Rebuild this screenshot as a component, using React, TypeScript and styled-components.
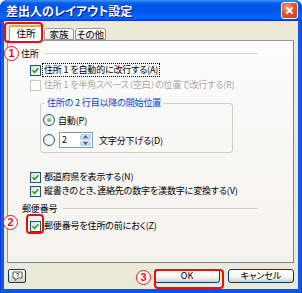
import styled, { createGlobalStyle } from "styled-components";

const Global = createGlobalStyle`
  html, body { margin: 0; padding: 0; background: #ffffff; }
  body {
    font-family: "Noto Sans CJK JP", "Liberation Sans", sans-serif;
    font-feature-settings: "palt";
  }
`;

const Window = styled.div`
  position: relative;
  width: 302px;
  height: 293px;
  display: flex;
  flex-direction: column;
  background: linear-gradient(to right, #0831d9 0, #1863ee 2px, #0055ea 4px, #0055ea 298px, #1863ee 300px, #0831d9 302px);
  border-radius: 7px 7px 0 0;
  overflow: hidden;
`;

const TitleBar = styled.div`
  height: 21px;
  flex: none;
  display: flex;
  align-items: center;
  padding: 0 4px 0 6px;
  background: linear-gradient(to bottom, #3d95ff 0, #0a5fe8 3px, #0054e3 6px, #0058ee 12px, #0066ff 17px, #005bff 19px, #003dd7 20px, #003dd7 21px);
`;

const Title = styled.div`
  flex: 1;
  color: #ffffff;
  font-size: 12px;
  font-weight: bold;
  line-height: 15px;
  text-shadow: 1px 1px 0 #0a1883;
`;

const CloseButton = styled.div`
  width: 15px;
  height: 15px;
  border: 1px solid #ffffff;
  border-radius: 3px;
  background: radial-gradient(circle at 35% 30%, #f2a48a 0, #e0552f 45%, #c5401a 100%);
  display: flex;
  align-items: center;
  justify-content: center;
`;

const Body = styled.div`
  flex: 1;
  margin: 0 4px 4px 4px;
  background: #ece9d8;
  display: flex;
  flex-direction: column;
  padding: 0 4px 0 3px;
`;

const Tabs = styled.div`
  height: 19px;
  flex: none;
  display: flex;
  align-items: flex-end;
  padding-left: 2px;
  position: relative;
  z-index: 1;
`;

const Tab = styled.div<{ $active?: boolean; $w: number }>`
  width: ${(p) => p.$w}px;
  height: ${(p) => (p.$active ? 16 : 12)}px;
  margin-bottom: ${(p) => (p.$active ? -1 : 0)}px;
  margin-right: 1px;
  box-sizing: border-box;
  border: 1px solid #919b9c;
  border-bottom: ${(p) => (p.$active ? "none" : "1px solid #919b9c")};
  border-top: ${(p) => (p.$active ? "2px solid #f6a832" : "1px solid #919b9c")};
  border-radius: 3px 3px 0 0;
  background: ${(p) => (p.$active ? "#fcfcfe" : "linear-gradient(to bottom, #ffffff, #ecebe6)")};
  font-size: 9.5px;
  line-height: ${(p) => (p.$active ? 13 : 10)}px;
  color: #000000;
  text-align: center;
`;

const Panel = styled.div`
  height: 223px;
  flex: none;
  box-sizing: border-box;
  border: 1px solid #919b9c;
  border-right-color: #7b8585;
  border-bottom-color: #7b8585;
  background: linear-gradient(to bottom, #fcfcfe, #f4f3ee);
  padding-top: 6px;
  display: flex;
  flex-direction: column;
  font-size: 9px;
  letter-spacing: -0.15px;
  color: #000000;
`;

const SectionHeader = styled.div<{ $top?: number }>`
  display: flex;
  align-items: center;
  height: 14px;
  margin-top: ${(p) => p.$top ?? 0}px;
  padding-left: 13px;
  width: 236px;
  line-height: 14px;
  gap: 6px;
`;

const Rule = styled.div`
  flex: 1;
  height: 0;
  border-top: 1px solid #d0d0bf;
  border-bottom: 1px solid #ffffff;
`;

const CheckRow = styled.div<{ $top?: number; $disabled?: boolean }>`
  display: flex;
  align-items: center;
  height: 14px;
  margin-top: ${(p) => p.$top ?? 0}px;
  padding-left: 22px;
  gap: 2px;
  color: ${(p) => (p.$disabled ? "#aca899" : "#000000")};
  white-space: nowrap;
`;

const Box = styled.div<{ $disabled?: boolean }>`
  width: 11px;
  height: 11px;
  box-sizing: border-box;
  flex: none;
  border: 1px solid ${(p) => (p.$disabled ? "#cac8bb" : "#1c5180")};
  background: ${(p) => (p.$disabled ? "#ffffff" : "linear-gradient(135deg, #dcdcd7, #ffffff)")};
  display: flex;
  align-items: center;
  justify-content: center;
`;

const Label = styled.span<{ $focus?: boolean }>`
  line-height: 12px;
  padding: 0 1px;
  outline: ${(p) => (p.$focus ? "1px dotted #000000" : "none")};
`;

const GroupBox = styled.div`
  position: relative;
  margin: 11px 0 0 32px;
  width: 193px;
  height: 50px;
  box-sizing: border-box;
  border: 1px solid #d0d0bf;
  border-radius: 3px;
  padding-top: 9px;
  display: flex;
  flex-direction: column;
`;

const Legend = styled.div`
  position: absolute;
  left: 4px;
  top: -7px;
  padding: 0 2px;
  background: #f9f9f8;
  color: #0046d5;
  line-height: 12px;
`;

const RadioRow = styled.div<{ $top?: number }>`
  display: flex;
  align-items: center;
  height: 14px;
  margin-top: ${(p) => p.$top ?? 0}px;
  padding-left: 2px;
  gap: 3px;
  white-space: nowrap;
`;

const Radio = styled.div<{ $on?: boolean }>`
  width: 12px;
  height: 12px;
  box-sizing: border-box;
  flex: none;
  border-radius: 50%;
  border: 1px solid #1c5180;
  background: radial-gradient(circle at 65% 65%, #ffffff 0, #e6e6e0 100%);
  display: flex;
  align-items: center;
  justify-content: center;
  &::after {
    content: "";
    display: ${(p) => (p.$on ? "block" : "none")};
    width: 4px;
    height: 4px;
    border-radius: 50%;
    background: radial-gradient(circle at 35% 35%, #8fe08f, #21a121);
  }
`;

const Spin = styled.div`
  width: 34px;
  height: 16px;
  box-sizing: border-box;
  border: 1px solid #7f9db9;
  background: #ffffff;
  display: flex;
  margin: 0 3px 0 1px;
`;

const SpinValue = styled.div`
  flex: 1;
  padding-left: 2px;
  line-height: 14px;
`;

const SpinButtons = styled.div`
  width: 11px;
  display: flex;
  flex-direction: column;
  gap: 1px;
  padding: 1px 1px 1px 0;
`;

const SpinArrow = styled.div`
  flex: 1;
  border-radius: 2px;
  background: linear-gradient(to bottom, #e1e9fb, #b9cbf3);
  border: 1px solid #b4c8f6;
  box-sizing: border-box;
  display: flex;
  align-items: center;
  justify-content: center;
`;

const Footer = styled.div`
  flex: 1;
  display: flex;
  align-items: center;
  padding: 0 0 0 1px;
  gap: 8px;
`;

const HelpButton = styled.div`
  width: 18px;
  height: 14px;
  box-sizing: border-box;
  border: 1px solid #003c74;
  border-radius: 2px;
  background: linear-gradient(to bottom, #ffffff, #d6d0c5);
  display: flex;
  align-items: center;
  justify-content: center;
`;

const Spacer = styled.div`
  flex: 1;
`;

const Button = styled.div`
  width: 66px;
  height: 14px;
  box-sizing: border-box;
  border: 1px solid #003c74;
  border-radius: 3px;
  background: linear-gradient(to bottom, #ffffff 0, #f4f4f0 60%, #d6d0c5 100%);
  font-size: 9px;
  line-height: 12px;
  text-align: center;
  color: #000000;
`;

const Mark = styled.div<{ $x: number; $y: number; $w: number; $h: number }>`
  position: absolute;
  left: ${(p) => p.$x}px;
  top: ${(p) => p.$y}px;
  width: ${(p) => p.$w}px;
  height: ${(p) => p.$h}px;
  box-sizing: border-box;
  border: 2px solid #e8100c;
  border-radius: 4px;
  z-index: 3;
  pointer-events: none;
`;

const Num = styled.div<{ $x: number; $y: number }>`
  position: absolute;
  left: ${(p) => p.$x}px;
  top: ${(p) => p.$y}px;
  width: 15px;
  height: 15px;
  box-sizing: border-box;
  border: 1.5px solid #e8100c;
  border-radius: 50%;
  background: #ffffff;
  color: #e8100c;
  font-family: "Liberation Sans", sans-serif;
  font-weight: bold;
  font-size: 11px;
  line-height: 12px;
  text-align: center;
  z-index: 3;
`;

const Check = () => (
  <svg width="7" height="7" viewBox="0 0 7 7">
    <path d="M0.5 3.2 L2.6 5.4 L6.5 1.2" stroke="#21a121" strokeWidth="1.6" fill="none" />
  </svg>
);

export default function App() {
  return (
    <>
      <Global />
      <Window>
        <TitleBar>
          <Title>差出人のレイアウト設定</Title>
          <CloseButton>
            <svg width="9" height="9" viewBox="0 0 9 9">
              <path d="M1.5 1.5 L7.5 7.5 M7.5 1.5 L1.5 7.5" stroke="#ffffff" strokeWidth="1.8" />
            </svg>
          </CloseButton>
        </TitleBar>
        <Body>
          <Tabs>
            <Tab $active $w={34}>住所</Tab>
            <Tab $w={30}>家族</Tab>
            <Tab $w={31}>その他</Tab>
          </Tabs>
          <Panel>
            <SectionHeader>
              住所
              <Rule />
            </SectionHeader>
            <CheckRow $top={2}>
              <Box><Check /></Box>
              <Label $focus>住所 1 を自動的に改行する(A)</Label>
            </CheckRow>
            <CheckRow $top={1} $disabled>
              <Box $disabled />
              <Label>住所 1 を半角スペース（空白）の位置で改行する(R)</Label>
            </CheckRow>
            <GroupBox>
              <Legend>住所の 2 行目以降の開始位置</Legend>
              <RadioRow>
                <Radio $on />
                自動(P)
              </RadioRow>
              <RadioRow $top={6}>
                <Radio />
                <Spin>
                  <SpinValue>2</SpinValue>
                  <SpinButtons>
                    <SpinArrow>
                      <svg width="5" height="3" viewBox="0 0 5 3"><path d="M0 3 L2.5 0 L5 3 Z" fill="#4d6185" /></svg>
                    </SpinArrow>
                    <SpinArrow>
                      <svg width="5" height="3" viewBox="0 0 5 3"><path d="M0 0 L2.5 3 L5 0 Z" fill="#4d6185" /></svg>
                    </SpinArrow>
                  </SpinButtons>
                </Spin>
                文字分下げる(D)
              </RadioRow>
            </GroupBox>
            <CheckRow $top={17}>
              <Box><Check /></Box>
              <Label>都道府県を表示する(N)</Label>
            </CheckRow>
            <CheckRow $top={0}>
              <Box><Check /></Box>
              <Label>縦書きのとき、連絡先の数字を漢数字に変換する(V)</Label>
            </CheckRow>
            <SectionHeader $top={4}>
              <span style={{ marginLeft: 1 }}>郵便番号</span>
              <Rule />
            </SectionHeader>
            <CheckRow $top={3}>
              <Box><Check /></Box>
              <Label>郵便番号を住所の前におく(Z)</Label>
            </CheckRow>
          </Panel>
          <Footer>
            <HelpButton>
              <svg width="11" height="10" viewBox="0 0 11 10">
                <path d="M1 1 H10 V7 H6 L3 9.5 V7 H1 Z" fill="#fffbe0" stroke="#333" strokeWidth="0.8" />
                <text x="5.5" y="6.3" fontSize="6" fontWeight="bold" fill="#1a3fb0" textAnchor="middle" fontFamily="Liberation Sans">?</text>
              </svg>
            </HelpButton>
            <Spacer />
            <Button>OK</Button>
            <Button>キャンセル</Button>
          </Footer>
        </Body>
        <Mark $x={4} $y={22} $w={39} $h={21} />
        <Mark $x={26} $y={214} $w={18} $h={20} />
        <Mark $x={154} $y={269} $w={70} $h={20} />
        <Num $x={4} $y={46}>1</Num>
        <Num $x={3} $y={215}>2</Num>
        <Num $x={136} $y={270}>3</Num>
      </Window>
    </>
  );
}
